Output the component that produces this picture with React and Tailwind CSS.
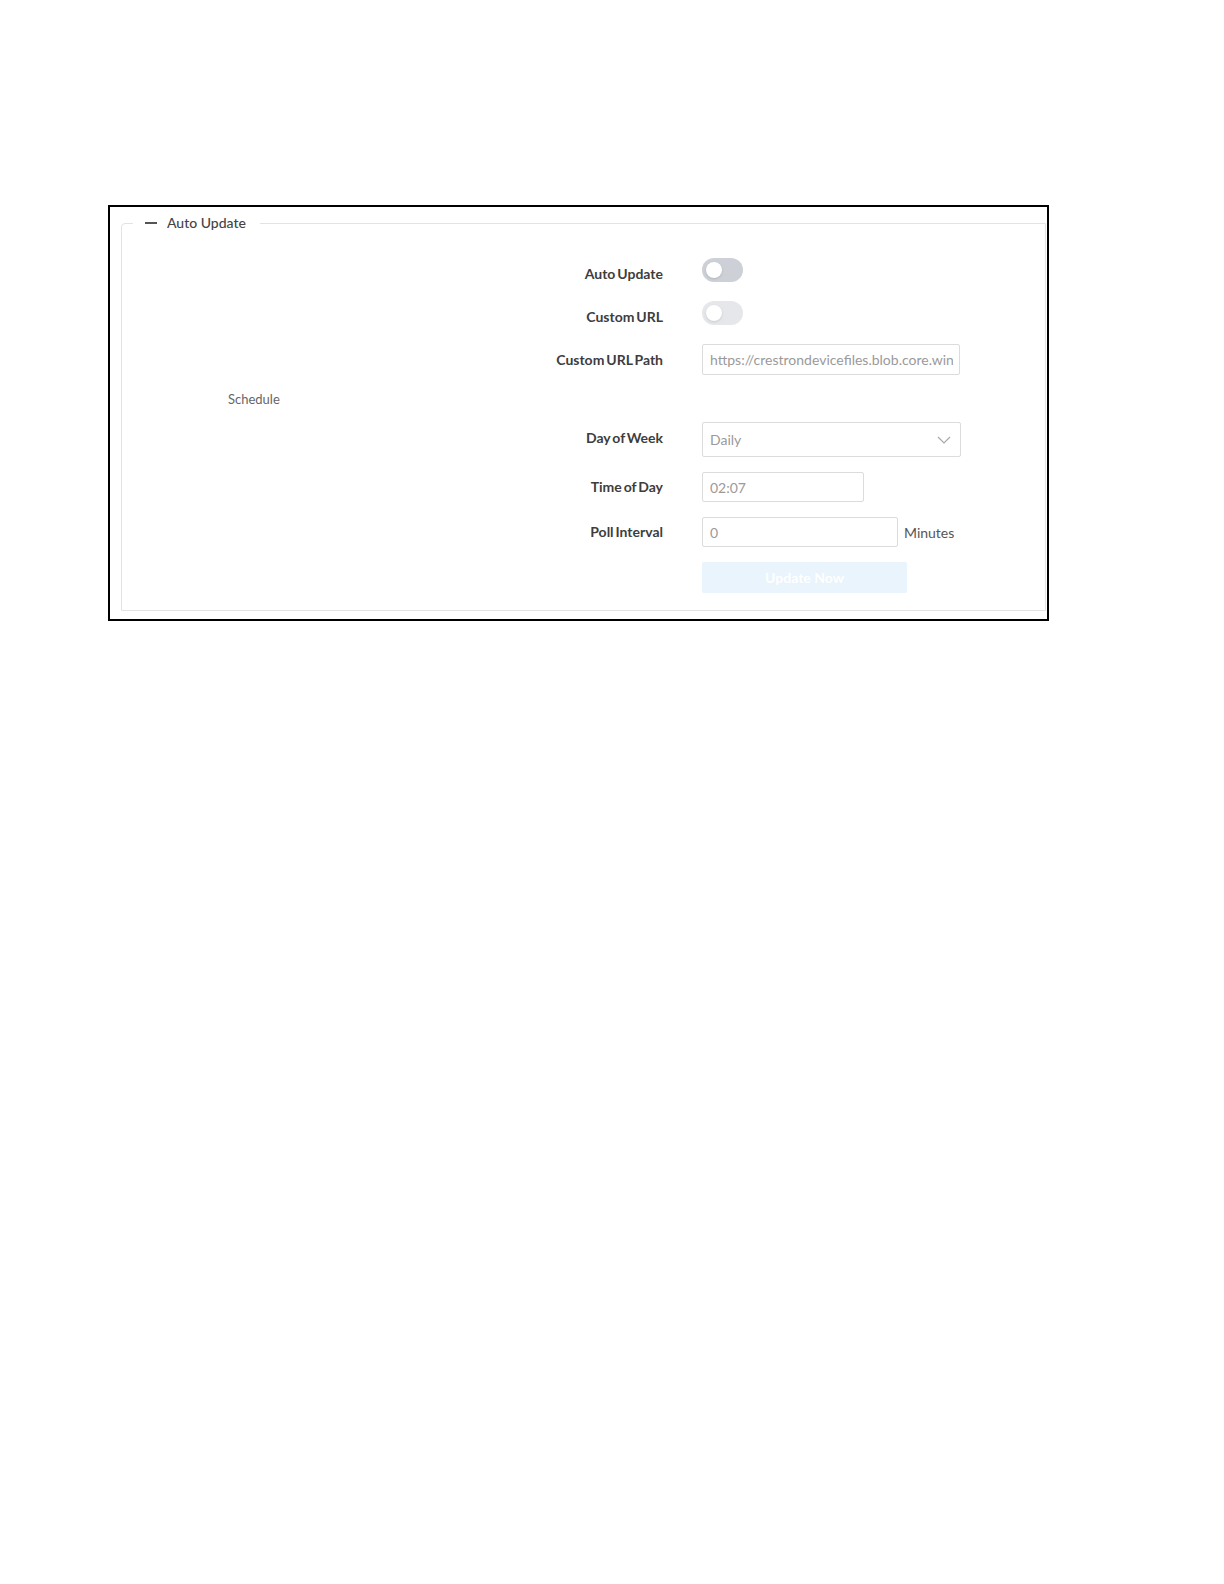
import React from 'react';

function Toggle({ disabled }) {
  return (
    <div
      className={
        'relative w-[41px] h-[24px] rounded-full ' +
        (disabled ? 'bg-[#e6e7ea]' : 'bg-[#cdd0d6]')
      }
    >
      <div className="absolute left-[4px] top-[4px] w-[16px] h-[16px] rounded-full bg-white shadow-sm" />
    </div>
  );
}

function Row({ label, height, className, labelClass = '', children }) {
  return (
    <div className={'flex items-center ' + className} style={{ height }}>
      <div
        className={
          'w-[541px] text-right text-[14px] font-bold text-[#3d3d3d] leading-5 [word-spacing:-1.5px] ' +
          labelClass
        }
      >
        {label}
      </div>
      <div className="ml-[39px] flex items-center h-full">{children}</div>
    </div>
  );
}

export default function App() {
  return (
    <div className="min-h-[1584px] bg-white pt-[205px] pl-[108px] font-['Lato','Open_Sans',sans-serif]">
      <div className="w-[941px] border-2 border-black pt-[6px] pb-[8px] pl-[11px] pr-[1px]">
        <fieldset className="border border-[#e3e3e3] rounded-tl-[4px] pb-[17px]">
          <legend className="ml-[11px] px-[12px] pr-[14px] h-5 flex items-center text-[14px] font-medium text-[#444] leading-5">
            <span className="inline-block w-[12px] h-[1.5px] bg-[#555] mr-[10px]" />
            Auto Update
          </legend>

          <Row label="Auto Update" height="24px" className="mt-[25px]" labelClass="translate-y-[4px]">
            <Toggle />
          </Row>
          <Row label="Custom URL" height="24px" className="mt-[19px]" labelClass="translate-y-[4px]">
            <Toggle disabled />
          </Row>
          <Row label="Custom URL Path" height="31px" className="mt-[19px]">
            <input
              readOnly
              value="https://crestrondevicefiles.blob.core.windows.net/firmware"
              className="w-[258px] h-[31px] border border-[#dcdcdc] rounded-[2px] pl-[7px] pr-[6px] text-[14px] text-[#9a9a9a] outline-none bg-white"
            />
          </Row>

          <div className="mt-[14px] h-[20px] flex items-center pl-[106px] text-[13px] text-[#666] leading-5">
            Schedule
          </div>

          <Row label="Day of Week" height="35px" className="mt-[13px]" labelClass="-translate-y-[2px]">
            <div className="w-[259px] h-[35px] border border-[#dcdcdc] rounded-[2px] flex items-center justify-between pl-[7px] pr-[9px] text-[14px] text-[#9a9a9a]">
              <span>Daily</span>
              <svg width="14" height="8" viewBox="0 0 14 8" fill="none">
                <path d="M1 1l6 6 6-6" stroke="#a8a8a8" strokeWidth="1.2" />
              </svg>
            </div>
          </Row>
          <Row label="Time of Day" height="30px" className="mt-[15px]">
            <input
              readOnly
              value="02:07"
              className="w-[162px] h-[30px] border border-[#dcdcdc] rounded-[2px] pl-[7px] text-[14px] text-[#9a9a9a] outline-none bg-white"
            />
          </Row>
          <Row label="Poll Interval" height="30px" className="mt-[15px]">
            <input
              readOnly
              value="0"
              className="w-[196px] h-[30px] border border-[#dcdcdc] rounded-[2px] pl-[7px] text-[14px] text-[#9a9a9a] outline-none bg-white"
            />
            <span className="ml-[6px] text-[14px] text-[#555]">Minutes</span>
          </Row>
          <Row label="" height="31px" className="mt-[15px]">
            <button className="w-[205px] h-[31px] rounded-[2px] bg-[#e9f4fc] text-white text-[14px] font-bold">
              Update Now
            </button>
          </Row>
        </fieldset>
      </div>
    </div>
  );
}
